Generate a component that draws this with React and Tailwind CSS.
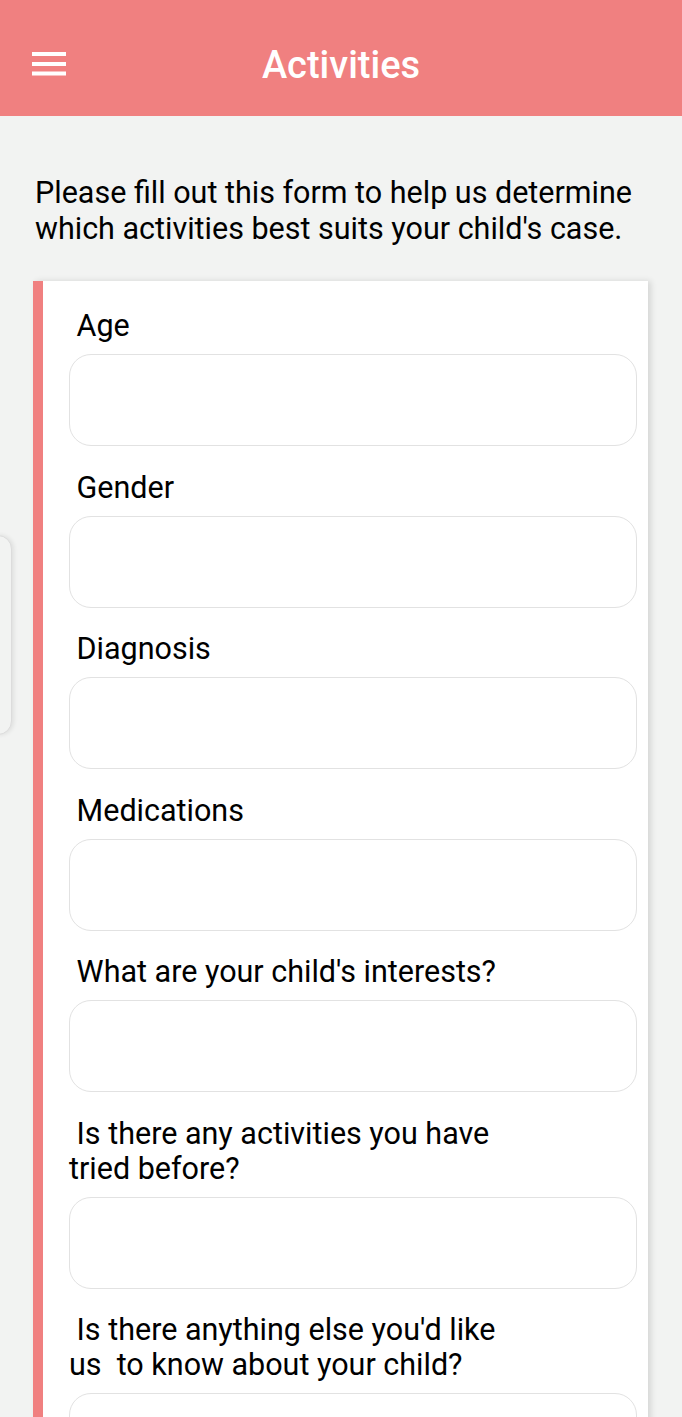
const fields = [
  " Age",
  " Gender",
  " Diagnosis",
  " Medications",
  " What are your child's interests?",
  " Is there any activities you have tried before?",
  " Is there anything else you'd like us  to know about your child?",
];

const App = () => {
  return (
    <div
      className="relative h-[1417px] overflow-hidden bg-[#f2f3f2] text-black"
      style={{ fontFamily: "Roboto, 'Noto Sans', sans-serif" }}
    >
      <header className="relative flex h-[116px] items-center justify-center bg-[#f08080] pt-[14px]">
        <button type="button" className="absolute left-[32px] top-[52px]">
          <svg width="34" height="24" viewBox="0 0 34 24">
            <rect x="0" y="0" width="34" height="4" fill="white" />
            <rect x="0" y="10" width="34" height="4" fill="white" />
            <rect x="0" y="19.5" width="34" height="4" fill="white" />
          </svg>
        </button>
        <h1 className="text-[38px] font-medium text-white">Activities</h1>
      </header>

      <p className="px-[35px] pt-[59px] text-[30.5px] leading-[36px]">
        Please fill out this form to help us determine which activities best
        suits your child's case.
      </p>

      {/* drawer handle peeking from the left */}
      <div className="absolute left-[-20px] top-[535px] h-[200px] w-[32px] rounded-r-[14px] border border-[#dcdcdc] bg-[#f2f3f2] shadow-[2px_0_4px_rgba(0,0,0,0.08)]" />

      <div className="ml-[33px] mt-[34px] w-[615px] border-l-[10px] border-[#f08080] bg-white pb-[40px] pl-[26px] pr-[11px] pt-[27px] shadow-[3px_0_6px_rgba(0,0,0,0.12)]">
        {fields.map((label) => (
          <div key={label} className="mb-[23.5px]">
            <label className="block max-w-[455px] whitespace-pre-wrap text-[30.5px] leading-[35px]">
              {label}
            </label>
            <input
              type="text"
              className="mt-[11px] block h-[92px] w-full rounded-[22px] border border-[#e2e2e2] bg-white outline-none"
            />
          </div>
        ))}
      </div>
    </div>
  );
};

export default App;
